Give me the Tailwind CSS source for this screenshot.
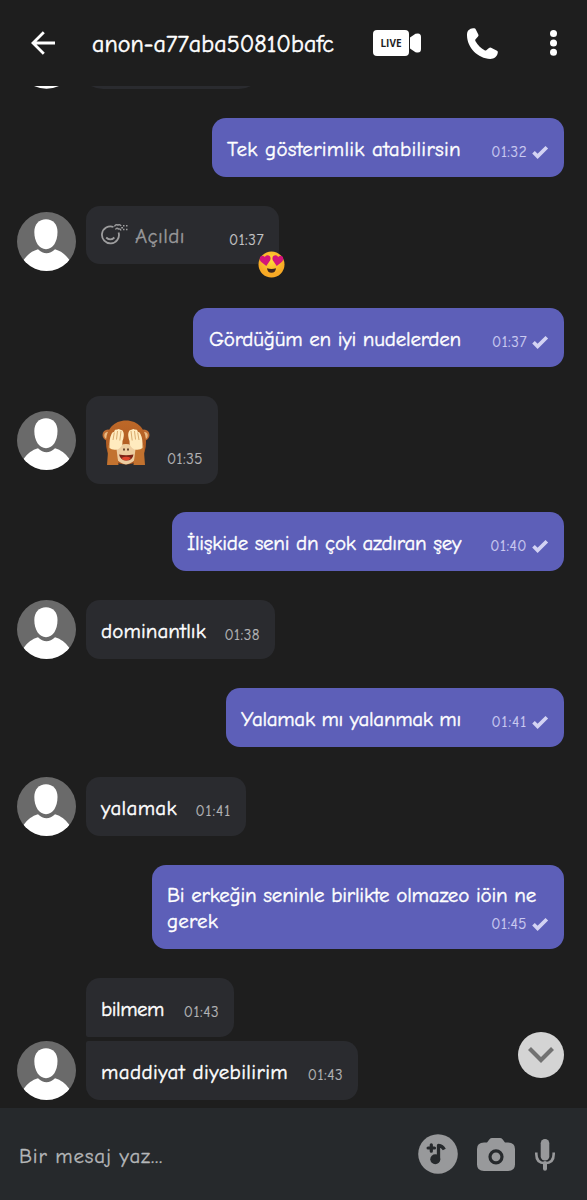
<!DOCTYPE html>
<html lang="tr">
<head>
<meta charset="utf-8">
<title>Sohbet</title>
<script src="https://cdn.jsdelivr.net/npm/@tailwindcss/browser@4"></script>
</head>
<body class="bg-[#1e1e1e]">
<svg class="hidden">
  <symbol id="avatar" viewBox="0 0 59 59">
    <rect width="59" height="59" fill="#6a6a6a"/>
    <path d="M0 59L6.500 48C11 42 15 39 21 37.200C26.500 42.500 32.500 42.500 38 37.200C44 39 48 42 52.500 48L59 59Z" fill="#fff"/>
    <path d="M29 7.200C36 7.200 40.500 12 40.500 20C40.500 29.500 36 37.200 29 37.200S17.300 29.500 17.300 20C17.300 12 22 7.200 29 7.200Z" fill="#fff"/>
  </symbol>
  <symbol id="check" viewBox="0 0 18 14"><path d="M2.500 7.300L6.600 11.300L15.800 2.200" fill="none" stroke="#d3d3f3" stroke-width="3.700"/></symbol>
</svg>
<div class="flex h-[1200px] w-[587px] flex-col overflow-hidden bg-[#1e1e1e] font-['Comic_Neue','Lato',sans-serif] text-white">
  <header class="flex h-[86px] shrink-0 items-center pl-[31px]">
    <svg class="size-6 shrink-0" viewBox="0 0 24 24" fill="none" stroke="#fff" stroke-width="2.800"><path d="M24 12H2M12.800 1.200L2 12L12.800 22.800"/></svg>
    <h1 class="ml-[37px] w-[281px] pt-0.5 text-[24px] leading-8 whitespace-nowrap tracking-[0.06px] [-webkit-text-stroke:0.5px]">anon-a77aba50810bafc</h1>
    <div class="flex items-center gap-px">
      <div class="flex h-[26px] w-9 items-center justify-center rounded-[4px] bg-white font-['Open_Sans',sans-serif] text-[10px] font-bold text-[#1e1e1e]">LIVE</div>
      <svg class="h-5 w-[11px]" viewBox="0 0 11 20"><path d="M0 4.500L5.500 .8Q11 -.8 11 4V16Q11 20.800 5.500 19.200L0 15.500Z" fill="#fff"/></svg>
    </div>
    <svg class="ml-[46px] h-[31px] w-[31px]" viewBox="0 0 31 31"><path d="M1.200 2.400Q4 -.3 7.200 .3Q8.300 .4 8.800 1.400L11.300 6.500Q11.800 7.600 11 8.600L8.400 11.500Q8 12.300 8.500 13.200C10.800 17.200 13.800 20 17.600 22.300Q18.500 22.800 19.300 22.200L22 19.900Q23 19.100 24.100 19.700L30 22.700Q31 23.300 30.800 24.600C30.300 28.500 27.200 31 23.300 31C11 30.500 .2 19.800 0 7.500Q-.2 4.200 1.200 2.400Z" fill="#fff"/></svg>
    <svg class="ml-[52px] h-[26px] w-[7px]" viewBox="0 0 7 26" fill="#fff"><circle cx="3.500" cy="3.500" r="3.500"/><circle cx="3.500" cy="12.900" r="3.500"/><circle cx="3.500" cy="22.200" r="3.500"/></svg>
  </header>

  <main class="relative flex h-[1022px] shrink-0 flex-col pr-[23px] pl-[17px]">
    <div class="flex h-[3px] shrink-0 items-start overflow-hidden">
      <svg class="h-[3px] w-[59px]" viewBox="0 0 59 3"><path d="M17 0H42Q29.500 5.500 17 0Z" fill="#fff"/></svg>
      <svg class="ml-[15px] h-[3px] w-[160px]" viewBox="0 0 160 3"><path d="M0 0H160Q154 3 148 3H12Q6 3 0 0Z" fill="#2a2b2f"/></svg>
    </div>

    <div class="mt-[29px] flex h-[59px] w-[352px] shrink-0 items-center self-end rounded-[14px] bg-[#5d5fb8] px-[15px]">
      <p class="pt-0.5 text-[21px] leading-7 whitespace-nowrap tracking-[0.27px] [-webkit-text-stroke:0.4px]">Tek gösterimlik atabilirsin</p>
      <div class="mt-2 ml-auto flex items-center gap-1 text-[15px] leading-5 tracking-[0.5px] text-[#cacaf0] [-webkit-text-stroke:0.2px]"><span>01:32</span><svg class="h-[14px] w-[18px]"><use href="#check"/></svg></div>
    </div>

    <div class="mt-[29px] flex h-[65px] shrink-0 items-end gap-[10px]">
      <svg class="size-[59px] rounded-full"><use href="#avatar"/></svg>
      <div class="relative mb-[7px] flex h-[58px] w-[193px] items-center rounded-[14px] bg-[#2a2b2f] px-[15px]">
        <svg class="mb-[3px] h-[22px] w-7" viewBox="0 0 28 22" fill="none" stroke="#9d9d9e" stroke-width="1.800"><path d="M12.500 4A8.500 8.500 0 1 0 17.600 9.500M5.200 14.500Q9.300 18.300 13.400 14.500"/><path d="M13.500 3.500Q14.500 1 16.800 2Q19.500 1 20 3.200M14.500 6.500Q16 4 17.300 6Q19.500 5.500 20 7.500" stroke-width="1.400"/><path d="M22 2.700H23.500M25 2.700H26.500M22 6.600H23.500M25 6.600H26.500M20.200 4.700H22" stroke-width="1.500"/></svg>
        <p class="ml-[6px] pt-0.5 text-[21px] leading-7 tracking-[0.4px] text-[#98989a] [-webkit-text-stroke:0.3px]">Açıldı</p>
        <span class="mt-2.5 ml-auto text-[15px] leading-5 tracking-[0.5px] text-[#c4c4c6] [-webkit-text-stroke:0.2px]">01:37</span>
        <svg class="absolute -right-[6px] -bottom-[14px] size-[27px]" viewBox="0 0 27 27">
          <defs><radialGradient id="face" cy=".35"><stop stop-color="#ffdc38"/><stop offset="1" stop-color="#f7a925"/></radialGradient></defs>
          <circle cx="13.500" cy="13.500" r="13" fill="url(#face)"/>
          <path d="M8.300 15L3 10.700C-.3 6.700 3.600 2.800 6.800 6C9 2.500 14 5 12.200 9.300Z" fill="#d3157a"/>
          <path d="M18.700 15L24 10.700C27.300 6.700 23.400 2.800 20.200 6C18 2.500 13 5 14.800 9.300Z" fill="#d3157a"/>
          <path d="M9 17.200Q13.500 18.800 18 17.200Q17.500 21.800 13.500 21.800T9 17.200Z" fill="#3c251c"/>
        </svg>
      </div>
    </div>

    <div class="mt-[37px] flex h-[59px] w-[371px] shrink-0 items-center self-end rounded-[14px] bg-[#5d5fb8] px-[15px]">
      <p class="pt-0.5 pl-px text-[21px] leading-7 whitespace-nowrap tracking-[-0.2px] [-webkit-text-stroke:0.4px]">Gördüğüm en iyi nudelerden</p>
      <div class="mt-2 ml-auto flex items-center gap-1 text-[15px] leading-5 tracking-[0.5px] text-[#cacaf0] [-webkit-text-stroke:0.2px]"><span>01:37</span><svg class="h-[14px] w-[18px]"><use href="#check"/></svg></div>
    </div>

    <div class="mt-[29px] flex h-[88px] shrink-0 items-center gap-[10px]">
      <svg class="size-[59px] rounded-full"><use href="#avatar"/></svg>
      <div class="flex h-[88px] w-[132px] items-center rounded-[14px] bg-[#2a2b2f] px-[15px]">
        <svg class="mt-[5px] h-[48px] w-[50px]" viewBox="0 0 50 48">
          <defs><linearGradient id="fur" x2="0" y2="1"><stop stop-color="#bd6828"/><stop offset="1" stop-color="#a95620"/></linearGradient></defs>
          <circle cx="7" cy="16" r="5.500" fill="#bd6c32"/><circle cx="43" cy="16" r="5.500" fill="#bd6c32"/>
          <circle cx="6.800" cy="16.500" r="3.500" fill="#e9b982"/><circle cx="43.200" cy="16.500" r="3.500" fill="#e9b982"/>
          <path d="M25 1.500C37 1.500 45 10.500 45 23C45 37 38 45.500 25 45.500S5 37 5 23C5 10.500 13 1.500 25 1.500Z" fill="url(#fur)"/>
          <path d="M15 30Q19 25 25 25Q31 25 35 30Q38 43 25 45.500Q12 43 15 30Z" fill="#edcda0"/>
          <path d="M23 29.500V31.500M27 29.500V31.500" stroke="#4b2817" stroke-width="1.600"/>
          <path d="M18 35.500Q25 37 32.500 35.500Q31.500 41.500 25.500 41.500T18 35.500Z" fill="#7a2417"/><path d="M20.500 39Q25 36.500 30 39Q28 41.500 25 41.500T20.500 39Z" fill="#e0452c"/>
          <path d="M7 26L15.500 30L17.500 46H6Q7 36 7 26Z" fill="#c2722f"/><path d="M43 26L34.500 30L32.500 46H44Q43 36 43 26Z" fill="#c2722f"/>
          <path d="M8.500 29Q8 20 10.500 15Q11.500 12.500 13 13Q14 9.800 16 10.800Q17.500 9 19.300 10.800Q22 10.500 22.500 13.500Q23.500 17 21.500 22Q22 28 16.500 30.500Q11 31.500 8.500 29Z" fill="#ffebbf"/>
          <path d="M41.500 29Q42 20 39.500 15Q38.500 12.500 37 13Q36 9.800 34 10.800Q32.500 9 30.700 10.800Q28 10.500 27.500 13.500Q26.500 17 28.500 22Q28 28 33.500 30.500Q39 31.500 41.500 29Z" fill="#ffebbf"/>
          <path d="M13.300 13.500L12 21M16.500 12L15.500 20.500M20 12L18.800 21.500M36.700 13.500L38 21M33.500 12L34.500 20.500M30 12L31.200 21.500" stroke="#d4a364" stroke-width=".9"/>
        </svg>
        <span class="mt-[38px] ml-auto text-[15px] leading-5 tracking-[0.5px] text-[#b4b4b6] [-webkit-text-stroke:0.2px]">01:35</span>
      </div>
    </div>

    <div class="mt-[28px] flex h-[59px] w-[392px] shrink-0 items-center self-end rounded-[14px] bg-[#5d5fb8] px-[15px]">
      <p class="pt-0.5 text-[21px] leading-7 whitespace-nowrap tracking-[-0.25px] [-webkit-text-stroke:0.4px]">İlişkide seni dn çok azdıran şey</p>
      <div class="mt-2 ml-auto flex items-center gap-1 text-[15px] leading-5 tracking-[0.5px] text-[#cacaf0] [-webkit-text-stroke:0.2px]"><span>01:40</span><svg class="h-[14px] w-[18px]"><use href="#check"/></svg></div>
    </div>

    <div class="mt-[29px] flex h-[59px] shrink-0 gap-[10px]">
      <svg class="size-[59px] rounded-full"><use href="#avatar"/></svg>
      <div class="flex w-[189px] items-center rounded-[14px] bg-[#2a2b2f] px-[15px]">
        <p class="pt-0.5 text-[21px] leading-7 tracking-[0.09px] [-webkit-text-stroke:0.4px]">dominantlık</p>
        <span class="mt-2.5 ml-auto text-[15px] leading-5 tracking-[0.5px] text-[#b4b4b6] [-webkit-text-stroke:0.2px]">01:38</span>
      </div>
    </div>

    <div class="mt-[29px] flex h-[59px] w-[338px] shrink-0 items-center self-end rounded-[14px] bg-[#5d5fb8] px-[15px]">
      <p class="pt-0.5 text-[21px] leading-7 whitespace-nowrap tracking-[-0.3px] [-webkit-text-stroke:0.4px]">Yalamak mı yalanmak mı</p>
      <div class="mt-2 ml-auto flex items-center gap-1 text-[15px] leading-5 tracking-[0.9px] text-[#cacaf0] [-webkit-text-stroke:0.2px]"><span>01:41</span><svg class="h-[14px] w-[18px]"><use href="#check"/></svg></div>
    </div>

    <div class="mt-[30px] flex h-[59px] shrink-0 gap-[10px]">
      <svg class="size-[59px] rounded-full"><use href="#avatar"/></svg>
      <div class="flex w-[160px] items-center rounded-[14px] bg-[#2a2b2f] px-[15px]">
        <p class="pt-0.5 text-[21px] leading-7 tracking-[0.33px] [-webkit-text-stroke:0.4px]">yalamak</p>
        <span class="mt-2 ml-auto text-[15px] leading-5 tracking-[0.9px] text-[#b4b4b6] [-webkit-text-stroke:0.2px]">01:41</span>
      </div>
    </div>

    <div class="mt-[29px] flex h-[84px] w-[412px] shrink-0 flex-col self-end rounded-[14px] bg-[#5d5fb8] px-[15px] pt-[17px]">
      <p class="text-[21px] leading-[26px] whitespace-nowrap tracking-[-0.19px] [-webkit-text-stroke:0.4px]">Bi erkeğin seninle birlikte olmazeo iöin ne</p>
      <div class="flex h-[26px] items-center justify-between">
        <p class="text-[21px] leading-[26px] tracking-[0.15px] [-webkit-text-stroke:0.4px]">gerek</p>
        <div class="mt-1.5 flex items-center gap-1 text-[15px] leading-5 tracking-[0.5px] text-[#cacaf0] [-webkit-text-stroke:0.2px]"><span>01:45</span><svg class="h-[14px] w-[18px]"><use href="#check"/></svg></div>
      </div>
    </div>

    <div class="mt-[29px] flex h-[122px] shrink-0 items-end gap-[10px]">
      <svg class="size-[59px] rounded-full"><use href="#avatar"/></svg>
      <div class="flex flex-col gap-1">
        <div class="flex h-[59px] w-[148px] items-center rounded-[14px] rounded-bl-[2px] bg-[#2a2b2f] px-[15px]">
          <p class="pt-0.5 text-[21px] leading-7 tracking-[-0.48px] [-webkit-text-stroke:0.4px]">bilmem</p>
          <span class="mt-2 ml-auto text-[15px] leading-5 tracking-[0.5px] text-[#b4b4b6] [-webkit-text-stroke:0.2px]">01:43</span>
        </div>
        <div class="flex h-[59px] w-[272px] items-center rounded-[14px] rounded-tl-[2px] bg-[#2a2b2f] px-[15px]">
          <p class="pt-0.5 text-[21px] leading-7 whitespace-nowrap tracking-[0.38px] [-webkit-text-stroke:0.4px]">maddiyat diyebilirim</p>
          <span class="mt-2 ml-auto text-[15px] leading-5 tracking-[0.5px] text-[#b4b4b6] [-webkit-text-stroke:0.2px]">01:43</span>
        </div>
      </div>
    </div>

    <div class="absolute right-[23px] bottom-[30px] flex size-[46px] items-center justify-center rounded-full bg-[#d4d4d4]">
      <svg class="h-4 w-[26px]" viewBox="0 0 26 16" fill="none" stroke="#717171" stroke-width="4.200"><path d="M1.500 1.500L13 13L24.500 1.500"/></svg>
    </div>
  </main>

  <footer class="flex flex-1 items-center bg-[#26292c] pl-[19px]">
    <p class="w-[399px] pt-1 text-[21px] leading-7 tracking-[0.8px] text-[#b5b7b9] [-webkit-text-stroke:0.3px]">Bir mesaj yaz...</p>
    <svg class="size-10" viewBox="0 0 40 40"><circle cx="20" cy="20" r="19.800" fill="#98999b"/><circle cx="17.300" cy="25.300" r="5" fill="#26292c"/><path d="M20.500 25V11.500Q24.500 12 26.300 15.500" fill="none" stroke="#26292c" stroke-width="3.300" stroke-linejoin="round"/><path d="M13.300 10.800V17.200M10.100 14H16.500" stroke="#26292c" stroke-width="3.200" stroke-linecap="round"/></svg>
    <svg class="ml-[19px] h-[33px] w-[38px]" viewBox="0 0 38 33"><path d="M10 4.500L12.500 1.300Q13.500 0 15 0H23Q24.500 0 25.500 1.300L28 4.500H31Q38 4.500 38 11V26.500Q38 33 31 33H7Q0 33 0 26.500V11Q0 4.500 7 4.500Z" fill="#98999b"/><circle cx="19" cy="18.800" r="6" fill="none" stroke="#26292c" stroke-width="3.200"/></svg>
    <svg class="mt-[2px] ml-5 h-8 w-5" viewBox="0 0 20 32"><rect x="5.700" y="0" width="8.600" height="21.500" rx="4.300" fill="#98999b"/><path d="M1.300 13.500V15Q1.300 24.200 10 24.200T18.700 15V13.500" fill="none" stroke="#98999b" stroke-width="2.600"/><path d="M10 24V29.800" stroke="#98999b" stroke-width="4" stroke-linecap="round"/></svg>
  </footer>
</div>
</body>
</html>
